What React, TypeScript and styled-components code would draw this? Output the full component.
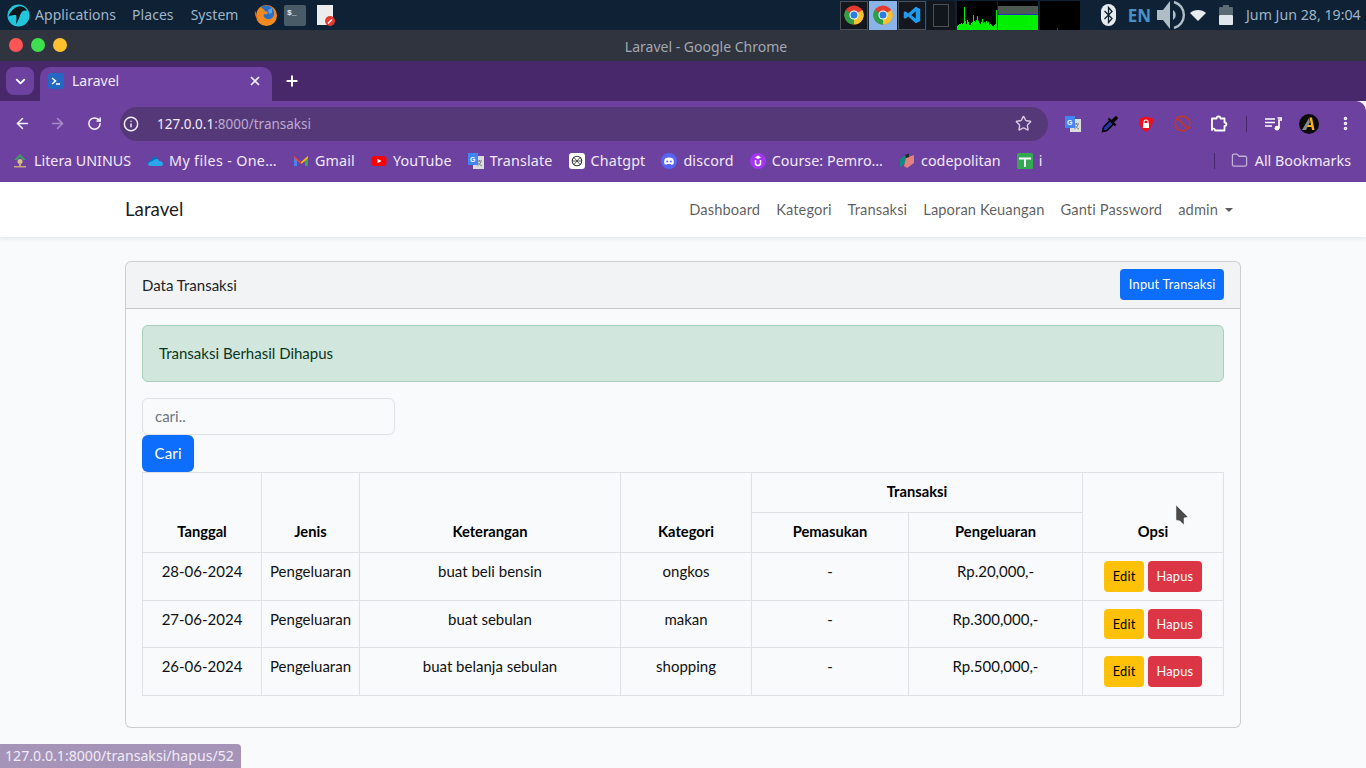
import React from 'react';
import styled, { createGlobalStyle } from 'styled-components';
import {
  ArrowLeft,
  ArrowRight,
  RotateCw,
  Info,
  Star,
  ChevronDown,
  X,
  Plus,
  EllipsisVertical,
  Folder,
} from 'lucide-react';

const UI_FONT = '"Noto Sans", sans-serif';
const PAGE_FONT = 'Lato, "Noto Sans", sans-serif';

const GlobalStyle = createGlobalStyle`
  html, body {
    margin: 0;
    padding: 0;
    height: 100%;
    overflow: hidden;
    background: #f8fafc;
  }
  * { box-sizing: border-box; }
`;

const Screen = styled.div`
  position: relative;
  width: 1366px;
  height: 768px;
  overflow: hidden;
  display: flex;
  flex-direction: column;
  background: #f8fafc;
`;

/* desktop panel */
const Panel = styled.div`
  height: 30px;
  flex: none;
  background: #0f2235;
  display: flex;
  align-items: center;
  justify-content: space-between;
  padding: 0 4px 0 7px;
  font: 14px ${UI_FONT};
  color: #9fb4c9;
`;

const PanelGroup = styled.div`
  display: flex;
  align-items: center;
  height: 100%;
`;

const PanelMenu = styled.span<{ $gap?: number }>`
  margin-left: ${(p) => p.$gap ?? 16}px;
  margin-bottom: 2px;
  white-space: nowrap;
  letter-spacing: 0.05px;
`;

const PanelIcon = styled.span<{ $left: number }>`
  display: flex;
  margin-left: ${(p) => p.$left}px;
`;

const TaskButton = styled.div<{ $active?: boolean }>`
  width: 28px;
  height: 29px;
  margin-right: 1px;
  display: flex;
  align-items: center;
  justify-content: center;
  background: ${(p) => (p.$active ? '#8ab4e8' : '#14181e')};
  border: 1px solid ${(p) => (p.$active ? '#8ab4e8' : '#4c5157')};
`;

const EmptyTask = styled.div`
  width: 28.5px;
  height: 29px;
  display: flex;
  align-items: center;
  justify-content: center;
  background: #11161c;
  span {
    width: 16px;
    height: 23px;
    border: 1px solid #4c5157;
  }
`;

const Monitor = styled.svg`
  display: block;
  width: 40px;
  height: 29px;
  margin-left: 1.5px;
  background: #000;
`;

const EnLabel = styled.span`
  margin-left: 12px;
  font: 700 17px ${UI_FONT};
  color: #4a90c8;
`;

const Clock = styled.span`
  width: 116px;
  margin-left: 13px;
  margin-bottom: 1px;
  white-space: nowrap;
  font-size: 14.2px;
`;

/* chrome title bar */
const TitleBar = styled.div`
  height: 31px;
  flex: none;
  background: #2f343f;
  position: relative;
  display: flex;
  align-items: center;
  justify-content: center;
  padding: 1px 0 0 46px;
  font: 14px ${UI_FONT};
  color: #a3a8b0;
`;

const Lights = styled.div`
  position: absolute;
  left: 9px;
  top: 8px;
  display: flex;
  gap: 8px;
`;

const Light = styled.span<{ $color: string }>`
  width: 14px;
  height: 14px;
  border-radius: 50%;
  background: ${(p) => p.$color};
`;

const TabStrip = styled.div`
  height: 40px;
  flex: none;
  background: #48286a;
  display: flex;
  align-items: flex-end;
  padding-left: 6px;
`;

const TabMenu = styled.div`
  width: 28px;
  height: 28px;
  margin-bottom: 6px;
  border-radius: 8px;
  background: #6d41a0;
  color: #fff;
  display: flex;
  align-items: center;
  justify-content: center;
`;

const Tab = styled.div`
  width: 232px;
  height: 34px;
  margin-left: 6px;
  border-radius: 10px 10px 0 0;
  background: #6d41a0;
  color: #f1e9f9;
  display: flex;
  align-items: center;
  padding: 0 10px 6px 8px;
  font: 14px ${UI_FONT};
`;

const TabFavicon = styled.span`
  width: 16px;
  height: 16px;
  border-radius: 3px;
  background: #2468c4;
  display: flex;
  margin-right: 8px;
`;

const TabTitle = styled.span`
  flex: 1;
  margin-bottom: 1px;
`;

const NewTab = styled.div`
  width: 40px;
  height: 34px;
  padding-bottom: 6px;
  color: #fff;
  display: flex;
  align-items: center;
  justify-content: center;
`;

const Toolbar = styled.div`
  height: 45px;
  flex: none;
  background: #6d41a0;
  display: flex;
  align-items: center;
  border-radius: 0 10px 0 0;
  color: #f4edfb;
`;

const NavIcon = styled.span<{ $width: number; $dim?: boolean }>`
  width: ${(p) => p.$width}px;
  flex: none;
  display: flex;
  justify-content: center;
  color: ${(p) => (p.$dim ? '#a78cc6' : '#f7f2fc')};
`;

const Omnibox = styled.div`
  width: 928px;
  height: 34px;
  flex: none;
  margin-left: 2px;
  border-radius: 17px;
  background: #553878;
  display: flex;
  align-items: center;
  padding: 0 16px 0 2px;
  font: 13.5px ${UI_FONT};
`;

const InfoChip = styled.span`
  width: 18px;
  height: 30px;
  display: flex;
  align-items: center;
  justify-content: center;
  margin-right: 17px;
  color: #f4edfb;
`;

const UrlHost = styled.span`
  color: #f4edfb;
`;

const UrlPath = styled.span`
  color: #bcaad2;
  flex: 1;
`;

const ToolbarSep = styled.span`
  width: 1px;
  height: 16px;
  background: #48286a;
`;

const Bookmarks = styled.div`
  height: 36px;
  flex: none;
  background: #6d41a0;
  display: flex;
  align-items: center;
  gap: 16px;
  padding: 0 0 7px 12px;
  font: 14.3px ${UI_FONT};
  letter-spacing: 0.15px;
  color: #f1e9f9;
`;

const Bookmark = styled.div<{ $spacing?: number }>`
  display: flex;
  align-items: center;
  gap: 6px;
  white-space: nowrap;
  letter-spacing: ${(p) => p.$spacing ?? 0.15}px;
`;

const BookmarkSep = styled.span`
  width: 1px;
  height: 16px;
  background: #48286a;
  margin-left: auto;
`;

const AllBookmarks = styled(Bookmark)`
  margin-right: 15px;
  gap: 7px;
  letter-spacing: 0;
  color: #f1e9f9;
  svg {
    color: #c3b2d8;
  }
`;

/* laravel page */
const Navbar = styled.nav`
  height: 55px;
  flex: none;
  background: #fff;
  box-shadow: 0 2px 4px rgba(0, 0, 0, 0.075);
  display: flex;
  align-items: center;
  justify-content: space-between;
  padding: 0 125px 2px;
  font-family: ${PAGE_FONT};
  position: relative;
`;

const Brand = styled.span`
  font-size: 18.7px;
  color: rgba(0, 0, 0, 0.9);
`;

const NavLinks = styled.div`
  display: flex;
  align-items: center;
  font-size: 14.7px;
  color: rgba(0, 0, 0, 0.65);
  letter-spacing: 0.1px;
`;

const NavLink = styled.span`
  padding: 8px;
  white-space: nowrap;
`;

const Caret = styled.span`
  display: inline-block;
  margin-left: 7px;
  vertical-align: 3px;
  border-top: 4.3px solid;
  border-left: 4.3px solid transparent;
  border-right: 4.3px solid transparent;
`;

const Main = styled.main`
  flex: 1;
  padding: 24px 125px 0;
  font-family: ${PAGE_FONT};
  font-size: 15px;
  color: #212529;
`;

const Card = styled.section`
  height: 467px;
  border: 1px solid rgba(0, 0, 0, 0.175);
  border-radius: 6px;
  background: #f8fafc;
`;

const CardHeader = styled.header`
  height: 47px;
  padding: 0 16px 1px;
  display: flex;
  align-items: center;
  justify-content: space-between;
  background: rgba(33, 37, 41, 0.03);
  border-bottom: 1px solid rgba(0, 0, 0, 0.175);
  border-radius: 5px 5px 0 0;
`;

const CardBody = styled.div`
  padding: 16px;
`;

const Button = styled.button<{ $bg: string; $fg: string; $small?: boolean }>`
  font-family: inherit;
  font-size: ${(p) => (p.$small ? '12.8px' : '15px')};
  height: ${(p) => (p.$small ? '30.7px' : '37px')};
  padding: ${(p) => (p.$small ? '0 8.5px 1px' : '0 12.5px 1px')};
  border: 0;
  border-radius: ${(p) => (p.$small ? '4px' : '6px')};
  background: ${(p) => p.$bg};
  color: ${(p) => p.$fg};
  letter-spacing: 0.2px;
  display: block;
`;

const Alert = styled.div`
  height: 57px;
  padding: 0 16px 1px;
  display: flex;
  align-items: center;
  margin-bottom: 16px;
  background: #d1e7dd;
  border: 1px solid #a3cfbb;
  border-radius: 6px;
  color: #0a3622;
`;

const SearchInput = styled.input`
  display: block;
  width: 253px;
  height: 37px;
  padding: 0 12px 1px;
  font-family: inherit;
  font-size: 15px;
  border: 1px solid #dee2e6;
  border-radius: 6px;
  background: transparent;
  color: #212529;
  &::placeholder {
    color: #6c757d;
    opacity: 1;
  }
`;

const Table = styled.table`
  width: 1081px;
  border-collapse: collapse;
  table-layout: fixed;
  color: #212529;
  th,
  td {
    border: 1px solid #dee2e6;
    padding: 8px;
    text-align: center;
  }
  th {
    vertical-align: bottom;
    font-size: 14.7px;
    font-weight: 700;
    line-height: 23px;
    padding: 7px 8px 9px;
    color: #000;
    height: 40px;
  }
  td {
    vertical-align: top;
    line-height: 21px;
    color: #111;
  }
`;

const ActionRow = styled.div`
  display: flex;
  gap: 4px;
  justify-content: center;
`;

const StatusBubble = styled.div`
  position: absolute;
  left: 0;
  bottom: 0;
  width: 241px;
  height: 24px;
  padding-left: 5px;
  background: #a594b8;
  border-radius: 0 4px 0 0;
  font: 14.15px/23px ${UI_FONT};
  color: #f0ebf6;
  white-space: nowrap;
`;

const Pointer = styled.svg`
  position: absolute;
  left: 1175px;
  top: 504px;
`;

const ChromeIcon: React.FC = () => (
  <svg width="20" height="20" viewBox="0 0 48 48">
    <circle cx="24" cy="24" r="23" fill="#e33b2e" />
    <path d="M24 24 L44 12 A23 23 0 0 1 24 47 Z" fill="#fbc02d" />
    <path d="M24 24 L24 47 A23 23 0 0 1 4 12 Z" fill="#2e9f49" />
    <circle cx="24" cy="24" r="11" fill="#fff" />
    <circle cx="24" cy="24" r="8.5" fill="#2a7de1" />
  </svg>
);

const FirefoxIcon: React.FC = () => (
  <svg width="24" height="24" viewBox="0 0 24 24">
    <circle cx="12.5" cy="12.5" r="10.5" fill="#f38a1f" />
    <path d="M1 8 C3 11 3 15 6 19 C3 16 0 12 1 8 Z" fill="#ee6c1f" />
    <path d="M7 4 C12 1 19 3 20 9 C21 14 17 17 13 16 C10 15 9 13 10 11 C12 12 14 11 14 9 C12 9 10 7 7 4 Z" fill="#2a6fc4" />
    <path d="M14 7 L18 5 L18 10 L15 11 Z" fill="#59a5e6" />
  </svg>
);

const LogoIcon: React.FC = () => (
  <svg width="23" height="23" viewBox="0 0 24 24">
    <circle cx="12" cy="12" r="11.5" fill="#22c6dc" />
    <path d="M1.5 13 C4 7 9 2 15 2.5 C18 3 20 5 21 7 C17 6 15 8 13.5 12 C12.5 15 11.5 18 9.5 21 C10 17 10 14 9.5 11.5 C7 11.5 4 12 1.5 13 Z" fill="#10151c" />
  </svg>
);

const TerminalIcon: React.FC = () => (
  <svg width="22" height="21" viewBox="0 0 22 21">
    <rect width="22" height="21" rx="2" fill="#4a5b68" />
    <text x="3" y="10" fontSize="8" fontFamily="Liberation Mono, monospace" fontWeight="700" fill="#e8eef2">$_</text>
  </svg>
);

const NoteIcon: React.FC = () => (
  <svg width="19" height="21" viewBox="0 0 19 21">
    <rect x="0" y="0" width="16" height="20" fill="#ececec" />
    <circle cx="13" cy="16" r="5" fill="#e5392f" />
    <path d="M10.5 18 L14.5 14 L15.5 15 L11.5 19 Z" fill="#fff" />
  </svg>
);

const VsCodeIcon: React.FC = () => (
  <svg width="18" height="18" viewBox="0 0 24 24">
    <path d="M17 1 L23 4 V20 L17 23 L7 14 L3 17 L1 16 V8 L3 7 L7 10 Z M17 7 L11 12 L17 17 Z" fill="#1f9cf0" />
  </svg>
);

const BluetoothIcon: React.FC = () => (
  <svg width="15" height="22" viewBox="0 0 15 22">
    <rect width="15" height="22" rx="7.5" fill="#e6ebef" />
    <path d="M3.5 7 L11 14.5 L7.5 18.5 V3.5 L11 7.5 L3.5 15" fill="none" stroke="#10202f" strokeWidth="1.3" />
  </svg>
);

const VolumeIcon: React.FC = () => (
  <svg width="30" height="30" viewBox="0 0 30 30">
    <path d="M1 10 H7 L14 1 V29 L7 20 H1 Z" fill="#aebdc6" />
    <path d="M17 10 A6 6 0 0 1 17 20 Z" fill="#aebdc6" />
    <path d="M18 2 A13.5 13.5 0 0 1 18 28" fill="none" stroke="#aebdc6" strokeWidth="2.4" />
  </svg>
);

const WifiIcon: React.FC = () => (
  <svg width="16" height="11" viewBox="0 0 16 11">
    <path d="M0 3 C4 -1 12 -1 16 3 L8 11 Z" fill="#e6ebef" />
  </svg>
);

const BatteryIcon: React.FC = () => (
  <svg width="14" height="20" viewBox="0 0 14 20">
    <rect x="4" y="0" width="6" height="2" fill="#5a6b76" />
    <rect y="2" width="14" height="8" rx="1" fill="#5a6b76" />
    <rect y="10" width="14" height="10" rx="1" fill="#dfe5e9" />
  </svg>
);

const LiteraIcon: React.FC = () => (
  <svg width="16" height="16" viewBox="0 0 16 16">
    <path d="M8 1 L14 7 H11 L8 4 L5 7 H2 Z" fill="#3f9a63" />
    <circle cx="8" cy="8.5" r="2.5" fill="#d9c28a" />
    <path d="M2 13 H14 V14.5 H2 Z" fill="#c9a57a" />
    <path d="M7 10 H9 V13 H7 Z" fill="#c9a57a" />
  </svg>
);

const OneDriveIcon: React.FC = () => (
  <svg width="16" height="16" viewBox="0 0 16 16">
    <path d="M4 7 C5 3 10 3 11 6 L7 11 L1 11 C0 9 2 7 4 7 Z" fill="#0f6cbd" />
    <path d="M7 7 C9 5 12 6 12 8 C14 8 16 9 16 11 C16 12 15 13 14 13 H4 C2 13 1 12 1 11 C2 9 4 9 7 7 Z" fill="#28a8ea" />
  </svg>
);

const GmailIcon: React.FC = () => (
  <svg width="16" height="16" viewBox="0 0 16 16">
    <path d="M1 3 V13 H4 V6 Z" fill="#4285f4" />
    <path d="M15 3 V13 H12 V6 Z" fill="#34a853" />
    <path d="M1 3 L8 9 L8 11 L4 8 L1 5 Z" fill="#ea4335" />
    <path d="M15 3 L8 9 L8 11 L12 8 L15 5 Z" fill="#fbbc04" />
  </svg>
);

const YouTubeIcon: React.FC = () => (
  <svg width="16" height="16" viewBox="0 0 16 16">
    <rect x="0.5" y="3" width="15" height="10" rx="3" fill="#f00" />
    <path d="M6.5 5.8 L10.5 8 L6.5 10.2 Z" fill="#fff" />
  </svg>
);

const TranslateIcon: React.FC = () => (
  <svg width="16" height="16" viewBox="0 0 16 16">
    <rect x="5" y="3" width="11" height="13" fill="#dadce0" />
    <path d="M9 8 H14 M11.5 7 V8.5 M13 8.5 C12 11 10.5 12.5 9.5 13 M10 9.5 C11 11 12.5 12.5 14 13" stroke="#757575" strokeWidth="0.9" fill="none" />
    <path d="M0 0 H10 V12 H0 Z" fill="#4285f4" />
    <text x="2" y="9" fontSize="7" fontWeight="700" fontFamily="Liberation Sans, sans-serif" fill="#fff">G</text>
  </svg>
);

const ChatgptIcon: React.FC = () => (
  <svg width="16" height="16" viewBox="0 0 16 16">
    <rect width="16" height="16" rx="3" fill="#fff" />
    <circle cx="8" cy="8" r="4.8" fill="none" stroke="#333" strokeWidth="1.1" />
    <path d="M5 4.5 L11 11.5 M11 4.5 L5 11.5 M3.5 8 H12.5" stroke="#333" strokeWidth="0.8" />
  </svg>
);

const DiscordIcon: React.FC = () => (
  <svg width="16" height="16" viewBox="0 0 16 16">
    <circle cx="8" cy="8" r="8" fill="#5865f2" />
    <path d="M4 5.5 C6.5 4.3 9.5 4.3 12 5.5 C13 7.5 13 9.5 12.5 11 C11.5 11.6 11 11.8 10.4 11.8 L9.9 11 H6.1 L5.6 11.8 C5 11.8 4.5 11.6 3.5 11 C3 9.5 3 7.5 4 5.5 Z" fill="#fff" />
    <circle cx="6.2" cy="8.5" r="1" fill="#5865f2" />
    <circle cx="9.8" cy="8.5" r="1" fill="#5865f2" />
  </svg>
);

const CourseIcon: React.FC = () => (
  <svg width="16" height="16" viewBox="0 0 16 16">
    <circle cx="8" cy="8" r="8" fill="#a435f0" />
    <path d="M5.5 7 V10.5 C5.5 13 10.5 13 10.5 10.5 V7" fill="none" stroke="#fff" strokeWidth="1.5" />
    <path d="M8 2.5 L11 4.5 L8 6 L5 4.5 Z" fill="#fff" />
  </svg>
);

const CodepolitanIcon: React.FC = () => (
  <svg width="16" height="16" viewBox="0 0 16 16">
    <path d="M1 6 L7 2 V10 L1 14 Z" fill="#128a7a" />
    <path d="M7 5 L15 2 V10 L8 15 L5 13 Z" fill="#e57f80" />
    <path d="M6 2 L10 0.5 V4 L7 5 Z" fill="#1a2e2c" />
  </svg>
);

const SheetIcon: React.FC = () => (
  <svg width="16" height="16" viewBox="0 0 16 16">
    <rect width="16" height="16" rx="1.5" fill="#34a853" />
    <path d="M2 4.5 H14 V6.5 H9 V14 H7 V6.5 H2 Z" fill="#fff" />
  </svg>
);

const DropperIcon: React.FC = () => (
  <svg width="18" height="18" viewBox="0 0 18 18">
    <path d="M1.5 16.5 L2.5 12 L9.5 5 L13 8.5 L6 15.5 Z" fill="#23359c" stroke="#000" strokeWidth="1.4" />
    <path d="M8 2.5 L10.5 5 L14 1.5 C15.5 0.3 17.7 2.5 16.5 4 L13 7.5 L15.5 10 L13.5 11 L7 4.5 Z" fill="#000" />
  </svg>
);

const ShieldIcon: React.FC = () => (
  <svg width="16" height="16" viewBox="0 0 16 16">
    <path d="M8 0.5 L15 2.5 C15 9 13 13 8 16 C3 13 1 9 1 2.5 Z" fill="#ee0f1c" />
    <rect x="5" y="7" width="6" height="5" rx="0.5" fill="#fff" />
    <path d="M6 7 V5.5 C6 3.5 10 3.5 10 5.5 V7" fill="none" stroke="#fff" strokeWidth="1.1" />
  </svg>
);

const BlockIcon: React.FC = () => (
  <svg width="17" height="17" viewBox="0 0 17 17">
    <circle cx="8.5" cy="8.5" r="7.3" fill="none" stroke="#c7371f" strokeWidth="1.5" />
    <path d="M3.5 3.5 L13.5 13.5" stroke="#c7371f" strokeWidth="1.5" />
  </svg>
);

const PuzzleIcon: React.FC = () => (
  <svg width="18" height="18" viewBox="0 0 18 18">
    <path d="M2 3.5 H6.5 C6.5 0.8 10.5 0.8 10.5 3.5 H14.5 V7.5 C17 7.5 17 11 14.5 11 V15.5 H5 C5 13 2 13 2 15 Z" fill="none" stroke="#fff" strokeWidth="1.8" strokeLinejoin="round" />
  </svg>
);

const MediaIcon: React.FC = () => (
  <svg width="17" height="14" viewBox="0 0 17 14">
    <path d="M0 2 H10 M0 5.5 H10 M0 9 H7" stroke="#fff" strokeWidth="1.6" />
    <path d="M12.5 1 H16.5 V3 H14 V11" fill="none" stroke="#fff" strokeWidth="1.7" />
    <circle cx="12" cy="11.2" r="2.4" fill="#fff" />
  </svg>
);

const AvatarIcon: React.FC = () => (
  <svg width="20" height="20" viewBox="0 0 20 20">
    <circle cx="10" cy="10" r="10" fill="#0b0b0b" />
    <path d="M3 16 L10 4 L11 8 L7 16 Z" fill="#8a8a8a" />
    <path d="M10.5 3.5 H13 L15.5 16 H13 L12.5 13 H8 L9 11 H12 L10.5 3.5 Z" fill="#f7b21a" />
  </svg>
);

const series = (values: number[], color: string) =>
  values.map((v, i) => <rect key={`${color}${i}`} x={i} y={29 - v} width="1" height={v} fill={color} />);

const CPU = [4, 5, 6, 6, 7, 6, 7, 23, 9, 6, 10, 8, 5, 5, 7, 8, 15, 9, 8, 10, 14, 9, 7, 6, 8, 11, 7, 8, 6, 9, 7, 8, 5, 6, 5, 4, 4, 5, 6, 20];

const rows = [
  { date: '28-06-2024', type: 'Pengeluaran', note: 'buat beli bensin', cat: 'ongkos', out: 'Rp.20,000,-' },
  { date: '27-06-2024', type: 'Pengeluaran', note: 'buat sebulan', cat: 'makan', out: 'Rp.300,000,-' },
  { date: '26-06-2024', type: 'Pengeluaran', note: 'buat belanja sebulan', cat: 'shopping', out: 'Rp.500,000,-' },
];

const App: React.FC = () => {
  return (
    <Screen>
      <GlobalStyle />
      <Panel>
        <PanelGroup>
          <LogoIcon />
          <PanelMenu $gap={5}>Applications</PanelMenu>
          <PanelMenu>Places</PanelMenu>
          <PanelMenu $gap={17}>System</PanelMenu>
          <PanelIcon $left={15}><FirefoxIcon /></PanelIcon>
          <PanelIcon $left={6}><TerminalIcon /></PanelIcon>
          <PanelIcon $left={11}><NoteIcon /></PanelIcon>
        </PanelGroup>
        <PanelGroup>
          <TaskButton><ChromeIcon /></TaskButton>
          <TaskButton $active><ChromeIcon /></TaskButton>
          <TaskButton><VsCodeIcon /></TaskButton>
          <EmptyTask><span /></EmptyTask>
          <Monitor viewBox="0 0 40 29">{series(CPU, '#00f000')}</Monitor>
          <Monitor viewBox="0 0 40 29">
            <rect width="40" height="5" y="0" fill="#000" />
            <rect width="40" height="8" y="5" fill="#4a5a52" />
            <rect width="40" height="1" y="13" fill="#2030c0" />
            <rect width="40" height="15" y="14" fill="#00f000" />
          </Monitor>
          <Monitor viewBox="0 0 40 29">
            <rect x="17" y="27" width="1" height="2" fill="#2030c0" />
          </Monitor>
          <PanelIcon $left={21}><BluetoothIcon /></PanelIcon>
          <EnLabel>EN</EnLabel>
          <PanelIcon $left={5}><VolumeIcon /></PanelIcon>
          <PanelIcon $left={4}><WifiIcon /></PanelIcon>
          <PanelIcon $left={13}><BatteryIcon /></PanelIcon>
          <Clock>Jum Jun 28, 19:04</Clock>
        </PanelGroup>
      </Panel>

      <TitleBar>
        <Lights>
          <Light $color="#ff5555" />
          <Light $color="#3fe04f" />
          <Light $color="#ffc02e" />
        </Lights>
        Laravel - Google Chrome
      </TitleBar>

      <TabStrip>
        <TabMenu><ChevronDown size={15} strokeWidth={3} /></TabMenu>
        <Tab>
          <TabFavicon>
            <svg width="16" height="16" viewBox="0 0 16 16">
              <path d="M4 5 L7.5 8 L4 11 M8 11 H12" fill="none" stroke="#fff" strokeWidth="1.5" />
            </svg>
          </TabFavicon>
          <TabTitle>Laravel</TabTitle>
          <X size={14} strokeWidth={3} />
        </Tab>
        <NewTab><Plus size={16} strokeWidth={3} /></NewTab>
      </TabStrip>

      <Toolbar>
        <NavIcon $width={44}><ArrowLeft size={17} strokeWidth={2.2} /></NavIcon>
        <NavIcon $width={26} $dim><ArrowRight size={17} strokeWidth={2.2} /></NavIcon>
        <NavIcon $width={48}><RotateCw size={15} strokeWidth={2.4} /></NavIcon>
        <Omnibox>
          <InfoChip><Info size={16} strokeWidth={2.2} /></InfoChip>
          <UrlHost>127.0.0.1</UrlHost>
          <UrlPath>:8000/transaksi</UrlPath>
          <Star size={17} strokeWidth={2} color="#d5c8e4" />
        </Omnibox>
        <NavIcon $width={50}><TranslateIcon /></NavIcon>
        <NavIcon $width={24}><DropperIcon /></NavIcon>
        <NavIcon $width={48}><ShieldIcon /></NavIcon>
        <NavIcon $width={24}><BlockIcon /></NavIcon>
        <NavIcon $width={50}><PuzzleIcon /></NavIcon>
        <NavIcon $width={4}><ToolbarSep /></NavIcon>
        <NavIcon $width={50}><MediaIcon /></NavIcon>
        <NavIcon $width={22}><AvatarIcon /></NavIcon>
        <NavIcon $width={50}><EllipsisVertical size={17} strokeWidth={3} /></NavIcon>
      </Toolbar>

      <Bookmarks>
        <Bookmark $spacing={0}><LiteraIcon />Litera UNINUS</Bookmark>
        <Bookmark $spacing={0.35}><OneDriveIcon />My files - One…</Bookmark>
        <Bookmark><GmailIcon />Gmail</Bookmark>
        <Bookmark><YouTubeIcon />YouTube</Bookmark>
        <Bookmark><TranslateIcon />Translate</Bookmark>
        <Bookmark><ChatgptIcon />Chatgpt</Bookmark>
        <Bookmark><DiscordIcon />discord</Bookmark>
        <Bookmark $spacing={0.05}><CourseIcon />Course: Pemro…</Bookmark>
        <Bookmark $spacing={0.05}><CodepolitanIcon />codepolitan</Bookmark>
        <Bookmark><SheetIcon />i</Bookmark>
        <BookmarkSep />
        <AllBookmarks><Folder size={17} strokeWidth={1.8} />All Bookmarks</AllBookmarks>
      </Bookmarks>

      <Navbar>
        <Brand>Laravel</Brand>
        <NavLinks>
          <NavLink>Dashboard</NavLink>
          <NavLink>Kategori</NavLink>
          <NavLink>Transaksi</NavLink>
          <NavLink>Laporan Keuangan</NavLink>
          <NavLink>Ganti Password</NavLink>
          <NavLink>admin<Caret /></NavLink>
        </NavLinks>
      </Navbar>

      <Main>
        <Card>
          <CardHeader>
            Data Transaksi
            <Button $small $bg="#0d6efd" $fg="#fff">Input Transaksi</Button>
          </CardHeader>
          <CardBody>
            <Alert>Transaksi Berhasil Dihapus</Alert>
            <SearchInput placeholder="cari.." />
            <Button $bg="#0d6efd" $fg="#fff">Cari</Button>
            <Table>
              <colgroup>
                <col width="119" />
                <col width="98" />
                <col width="261" />
                <col width="131" />
                <col width="157" />
                <col width="174" />
                <col width="141" />
              </colgroup>
              <thead>
                <tr>
                  <th rowSpan={2}>Tanggal</th>
                  <th rowSpan={2}>Jenis</th>
                  <th rowSpan={2}>Keterangan</th>
                  <th rowSpan={2}>Kategori</th>
                  <th colSpan={2}>Transaksi</th>
                  <th rowSpan={2}>Opsi</th>
                </tr>
                <tr>
                  <th>Pemasukan</th>
                  <th>Pengeluaran</th>
                </tr>
              </thead>
              <tbody>
                {rows.map((r) => (
                  <tr key={r.date}>
                    <td>{r.date}</td>
                    <td>{r.type}</td>
                    <td>{r.note}</td>
                    <td>{r.cat}</td>
                    <td>-</td>
                    <td>{r.out}</td>
                    <td>
                      <ActionRow>
                        <Button $small $bg="#ffc107" $fg="#000">Edit</Button>
                        <Button $small $bg="#dc3545" $fg="#fff">Hapus</Button>
                      </ActionRow>
                    </td>
                  </tr>
                ))}
              </tbody>
            </Table>
          </CardBody>
        </Card>
      </Main>

      <Pointer width="14" height="22" viewBox="0 0 14 22">
        <path d="M1 1 L13 13 L9 14 L9 21 L5 17 L1 16 Z" fill="#4a4a4a" stroke="#eee" strokeWidth="0.5" />
      </Pointer>
      <StatusBubble>127.0.0.1:8000/transaksi/hapus/52</StatusBubble>
    </Screen>
  );
};

export default App;
